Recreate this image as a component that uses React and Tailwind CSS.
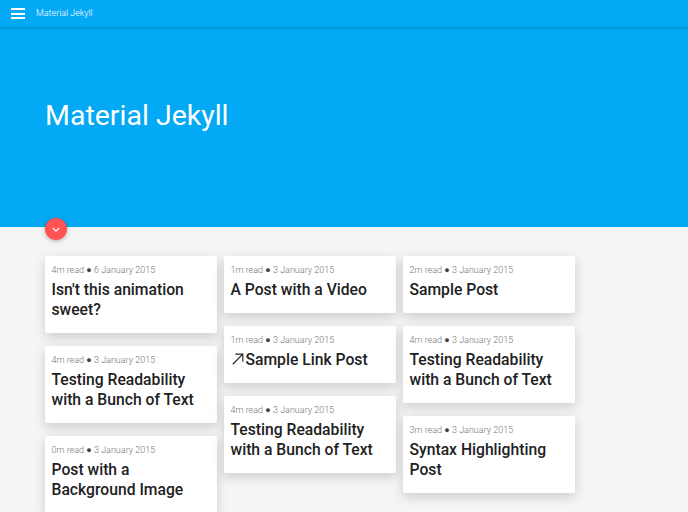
const columns = [
  [
    { meta: ['4m read', '6 January 2015'], title: "Isn't this animation sweet?" },
    { meta: ['4m read', '3 January 2015'], title: 'Testing Readability with a Bunch of Text' },
    { meta: ['0m read', '3 January 2015'], title: 'Post with a Background Image' },
  ],
  [
    { meta: ['1m read', '3 January 2015'], title: 'A Post with a Video' },
    { meta: ['1m read', '3 January 2015'], title: 'Sample Link Post', link: true },
    { meta: ['4m read', '3 January 2015'], title: 'Testing Readability with a Bunch of Text' },
  ],
  [
    { meta: ['2m read', '3 January 2015'], title: 'Sample Post' },
    { meta: ['4m read', '3 January 2015'], title: 'Testing Readability with a Bunch of Text' },
    { meta: ['3m read', '3 January 2015'], title: 'Syntax Highlighting Post' },
  ],
]

function PostCard({ post }) {
  return (
    <div className="w-[172px] shrink-0 bg-white rounded-[2px] px-[6.5px] pt-[7.5px] pb-[13px] shadow-[0_4px_12px_rgba(0,0,0,0.17)]">
      <p className="text-[9px] leading-[13px] font-light text-[#757575]">
        {post.meta[0]} <span className="text-[#424242]">●</span> {post.meta[1]}
      </p>
      <h2 className="mt-[3.5px] text-[15.7px] leading-[20px] font-medium text-[#212121]">
        {post.link && (
          <svg viewBox="0 0 16 16" className="inline-block w-[14px] h-[14px] mr-[1px] align-[-1px]" fill="none" stroke="#212121" strokeWidth="1.3">
            <path d="M2 14 L13.5 2.5 M5 2.5 H13.5 V11" />
          </svg>
        )}
        {post.title}
      </h2>
    </div>
  )
}

export default function App() {
  return (
    <div className="h-[512px] overflow-hidden bg-[#f5f5f5] font-['Roboto',sans-serif]">
      <header className="relative z-10 h-[27px] flex items-center bg-[#03a9f4] shadow-[0_1px_3px_rgba(0,0,0,0.2)]">
        <div className="ml-[11px] w-[14px] flex flex-col gap-[2.5px]">
          <span className="h-[2px] bg-white" />
          <span className="h-[2px] bg-white" />
          <span className="h-[2px] bg-white" />
        </div>
        <span className="ml-[11px] text-[9px] font-light text-white">Material Jekyll</span>
      </header>

      <section className="relative h-[199.5px] bg-[#03a9f4] pl-[45px] pt-[70.5px]">
        <h1 className="text-[28.5px] leading-[36px] font-normal text-white">Material Jekyll</h1>
        <button className="absolute left-[45px] bottom-[-13.5px] w-[22px] h-[22px] rounded-full bg-[#ff5252] flex items-center justify-center shadow-[0_1px_4px_rgba(0,0,0,0.3)]">
          <svg viewBox="0 0 10 6" className="w-[8px] h-[5px]" fill="none" stroke="white" strokeWidth="1.6">
            <path d="M1 1 L5 5 L9 1" />
          </svg>
        </button>
      </section>

      <main className="flex gap-[7px] pl-[45px] pt-[29.5px]">
        {columns.map((col, i) => (
          <div key={i} className="flex flex-col gap-[13px]">
            {col.map((post, j) => (
              <PostCard key={j} post={post} />
            ))}
          </div>
        ))}
      </main>
    </div>
  )
}
